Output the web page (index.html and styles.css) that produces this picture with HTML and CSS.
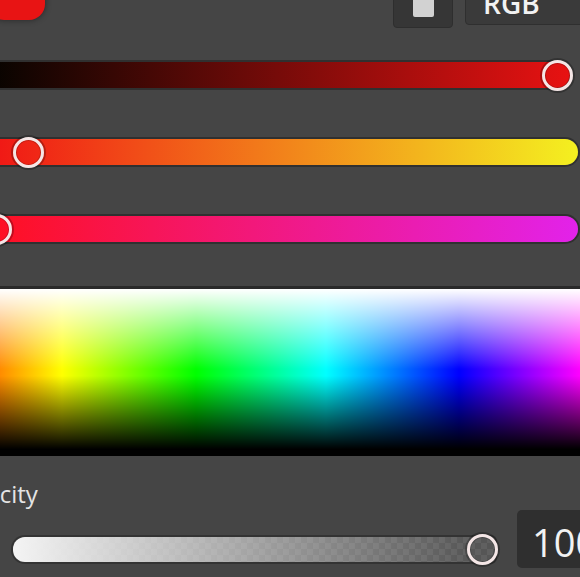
FILE: index.html
```html
<!DOCTYPE html>
<html lang="en">
<head>
    <meta charset="UTF-8">
    <meta name="viewport" content="width=device-width, initial-scale=1.0">
    <title>Color Picker</title>
    <link rel="stylesheet" href="styles.css">
</head>
<body>
    <div class="picker">
        <!-- Header: current colour, copy button, mode -->
        <div class="head">
            <div class="swatch"></div>
            <div class="tools">
                <button type="button" class="copy-btn"><span class="copy-icon"></span></button>
                <div class="mode">RGB</div>
            </div>
        </div>

        <!-- Channel sliders -->
        <div class="channel">
            <div class="track track-red">
                <span class="knob" style="left: 97.9%"></span>
            </div>
        </div>
        <div class="channel">
            <div class="track track-green">
                <span class="knob" style="left: 6.8%"></span>
            </div>
        </div>
        <div class="channel">
            <div class="track track-blue">
                <span class="knob" style="left: 1.5%"></span>
            </div>
        </div>

        <!-- Spectrum -->
        <div class="spectrum"></div>

        <!-- Opacity -->
        <div class="opacity-label">Opacity</div>
        <div class="opacity-row">
            <div class="alpha">
                <span class="knob" style="left: 97.5%"></span>
            </div>
            <div class="alpha-value">100</div>
        </div>
    </div>
</body>
</html>
```

FILE: styles.css
```css
body {
    margin: 0;
    background-color: #454545;
    font-family: "Open Sans", Arial, sans-serif;
    color: #ececec;
    overflow: hidden;
}

.picker {
    width: 620px;
    margin: -22px 0 0 -12px;
}

.head {
    display: flex;
    justify-content: space-between;
    align-items: flex-start;
    height: 50px;
}

.swatch {
    width: 57px;
    height: 42px;
    background-color: #e81414;
    border-radius: 0 0 16px 16px;
    box-shadow: 0 0 6px rgba(0, 0, 0, 0.45);
}

.tools {
    display: flex;
    gap: 12px;
    align-items: flex-start;
}

.copy-btn {
    width: 60px;
    height: 50px;
    padding: 0;
    background-color: #363636;
    border: 1px solid #2e2e2e;
    border-radius: 4px;
    display: flex;
    justify-content: center;
}

.copy-icon {
    display: block;
    width: 21px;
    height: 38px;
    background-color: #d2d2d2;
    border-radius: 2px;
}

.mode {
    width: 143px;
    height: 47px;
    box-sizing: border-box;
    padding: 10px 0 0 17px;
    background-color: #3a3a3a;
    border: 1px solid #2f2f2f;
    border-radius: 4px;
    font-size: 28px;
    font-weight: 600;
    line-height: 28px;
    color: #f2f2f2;
}

.channel {
    margin-top: 34px;
}

.channel + .channel {
    margin-top: 51px;
}

.track {
    position: relative;
    height: 26px;
    margin-right: 30px;
    border-radius: 13px;
    box-shadow: 0 0 0 2px rgba(0, 0, 0, 0.3);
}

.track-red {
    margin-right: 38px;
    background: linear-gradient(to right, #060400, #e81212);
}

.track-green {
    background: linear-gradient(to right, #f01515, #f4f020);
}

.track-blue {
    background: linear-gradient(to right, #ff1020, #e222ea);
}

.knob {
    position: absolute;
    top: 50%;
    width: 31px;
    height: 31px;
    margin: -15.5px 0 0 -15.5px;
    box-sizing: border-box;
    border: 3px solid #f4e6e6;
    border-radius: 50%;
    box-shadow: 0 0 0 2px rgba(0, 0, 0, 0.25), inset 0 0 0 1px rgba(0, 0, 0, 0.2);
}

.spectrum {
    margin-top: 44px;
    height: 167px;
    border-top: 3px solid #2a2a2a;
    background:
        linear-gradient(to bottom, #fff 0%, rgba(255, 255, 255, 0) 48%, rgba(0, 0, 0, 0) 52%, #000 96%),
        linear-gradient(to right, #ff7000 0px, #ff8c00 12px, #ffff00 74px, #00ff00 208px, #00ffff 338px, #0000ff 471px, #ff00ff 592px, #ff00c0 620px);
}

.opacity-label {
    margin: 22px 0 0 -35px;
    font-size: 24px;
    line-height: 32px;
    color: #e4e4e4;
}

.opacity-row {
    display: flex;
    align-items: flex-end;
    height: 58px;
}

.alpha {
    position: relative;
    width: 482px;
    height: 25px;
    margin: 0 0 6px 25px;
    border-radius: 12px 4px 4px 12px;
    box-shadow: 0 0 0 2px rgba(0, 0, 0, 0.25);
    background:
        linear-gradient(to right, #f4f4f4, rgba(255, 255, 255, 0.55) 40%, rgba(255, 255, 255, 0) 95%),
        repeating-conic-gradient(#606060 0 25%, #565656 0 50%) 0 0 / 12px 12px;
}

.alpha-value {
    width: 91px;
    height: 58px;
    box-sizing: border-box;
    margin-left: 22px;
    padding: 6px 0 0 15px;
    background-color: #2f2f2f;
    border-radius: 5px;
    font-size: 38px;
    line-height: 52px;
    color: #f2f2f2;
}
```
